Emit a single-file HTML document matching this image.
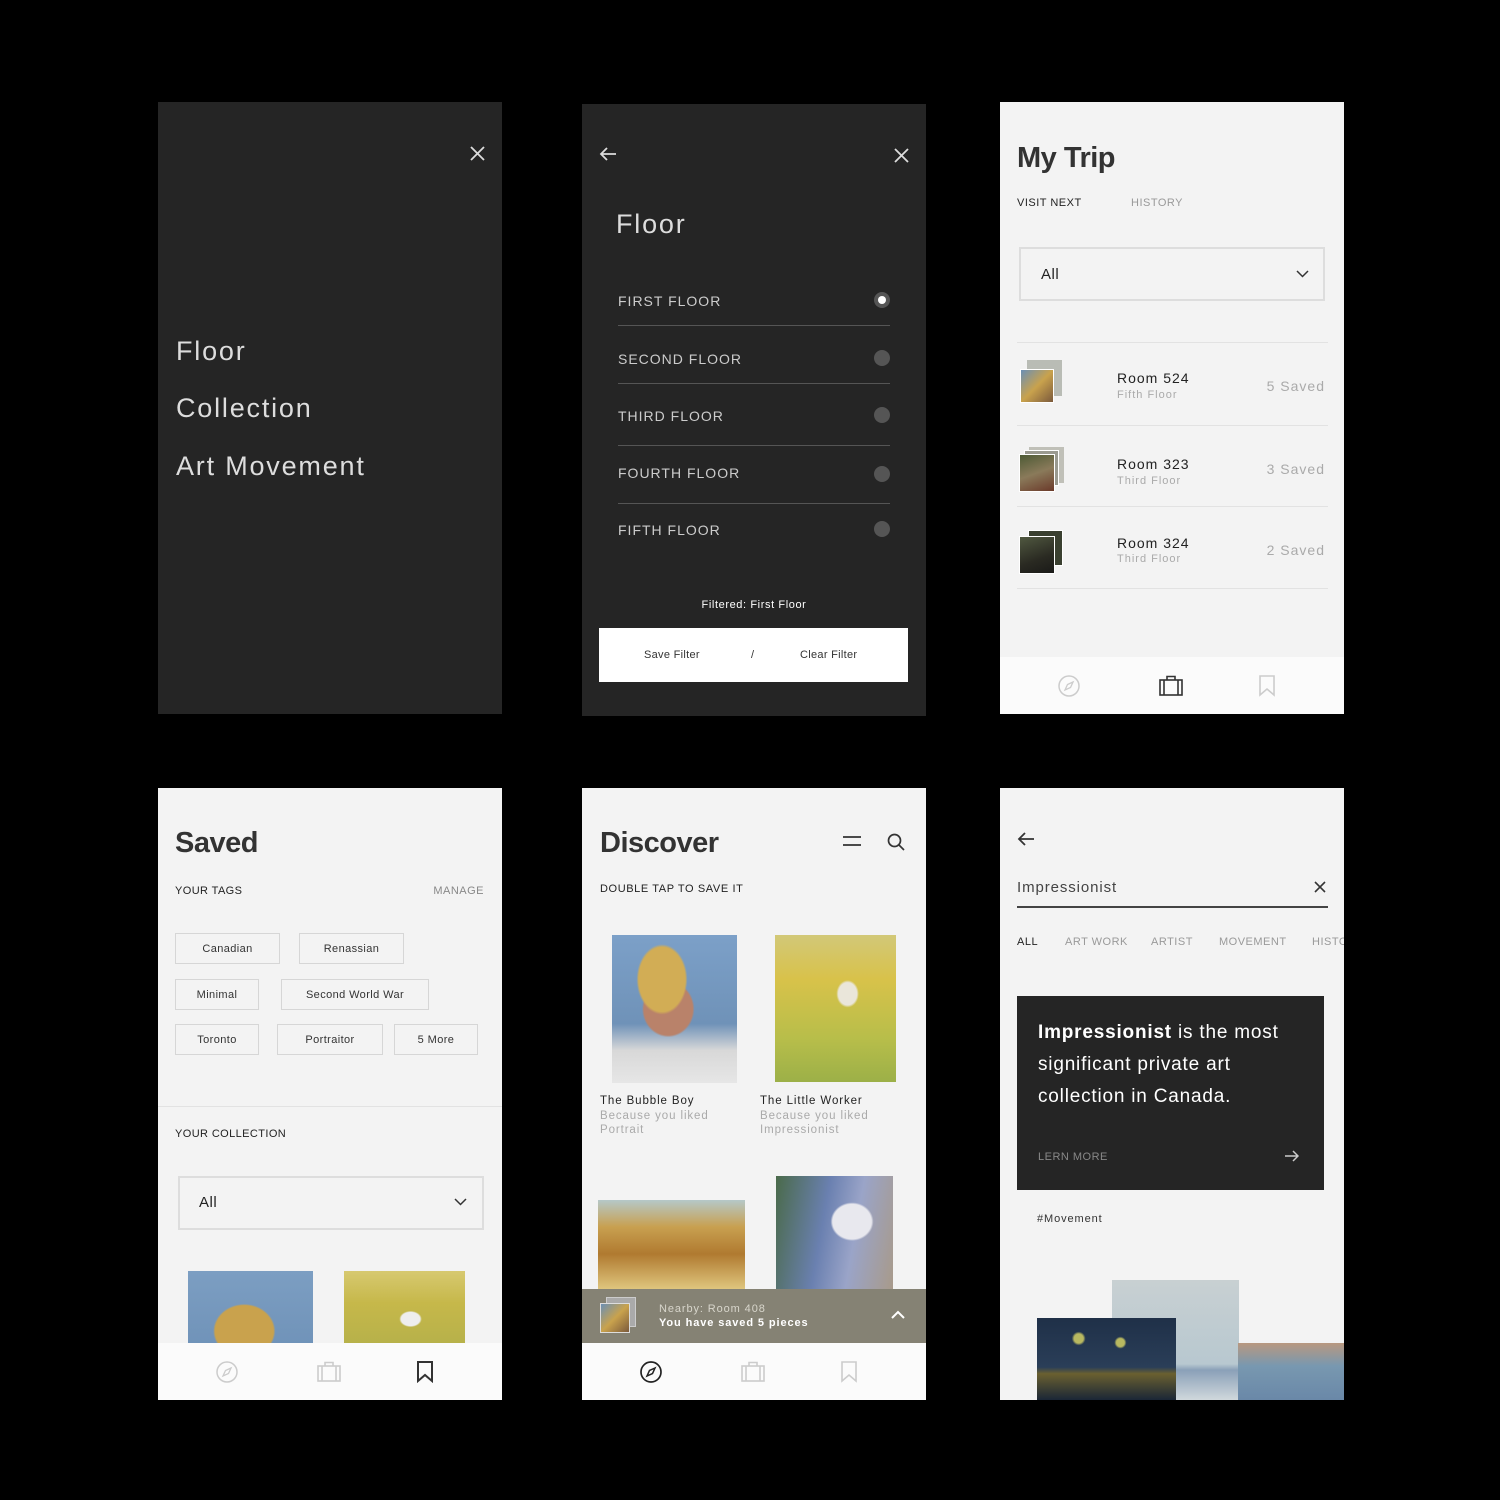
<!DOCTYPE html>
<html><head><meta charset="utf-8"><style>
*{margin:0;padding:0;box-sizing:border-box}
body{width:1500px;height:1500px;background:#000;position:relative;overflow:hidden;font-family:"Liberation Sans",sans-serif}
.p{position:absolute;width:344px;height:612px;overflow:hidden}
.d{background:#252525}.l{background:#f3f3f3}
.a{position:absolute;white-space:nowrap}
.nav{position:absolute;left:0;top:555px;width:344px;height:57px;background:#fbfbfb}
.tag{position:absolute;border:1.5px solid #d6d6d6;font-size:11px;color:#333;letter-spacing:.4px;display:flex;align-items:center;justify-content:center}
.hl{position:absolute;height:1px;background:#e2e2e2}
.t{font-size:29px;color:#333;font-weight:bold;letter-spacing:-.5px}
</style></head><body>

<!-- Panel 1 -->
<div class="p d" style="left:158px;top:102px">
<svg class="a" style="left:312px;top:44px" width="15" height="15"><path d="M1 1L14 14M14 1L1 14" stroke="#ddd" stroke-width="1.8"/></svg>
<div class="a" style="left:18px;top:234px;font-size:27px;color:#ddd;letter-spacing:1.8px">Floor</div>
<div class="a" style="left:18px;top:291px;font-size:27px;color:#ddd;letter-spacing:1.8px">Collection</div>
<div class="a" style="left:18px;top:349px;font-size:27px;color:#ddd;letter-spacing:1.8px">Art Movement</div>
</div>

<!-- Panel 2 -->
<div class="p d" style="left:582px;top:104px">
<svg class="a" style="left:17px;top:43px" width="18" height="14"><path d="M17 7H2M8 1L2 7l6 6" stroke="#ddd" stroke-width="1.8" fill="none"/></svg>
<svg class="a" style="left:312px;top:44px" width="15" height="15"><path d="M1 1L14 14M14 1L1 14" stroke="#ddd" stroke-width="1.8"/></svg>
<div class="a" style="left:34px;top:105px;font-size:27px;color:#ddd;letter-spacing:1.8px">Floor</div>
<div class="a" style="left:36px;top:189px;font-size:14px;color:#ccc;letter-spacing:1px">FIRST FLOOR</div>
<div class="a" style="left:36px;top:247px;font-size:14px;color:#ccc;letter-spacing:1px">SECOND FLOOR</div>
<div class="a" style="left:36px;top:304px;font-size:14px;color:#ccc;letter-spacing:1px">THIRD FLOOR</div>
<div class="a" style="left:36px;top:361px;font-size:14px;color:#ccc;letter-spacing:1px">FOURTH FLOOR</div>
<div class="a" style="left:36px;top:418px;font-size:14px;color:#ccc;letter-spacing:1px">FIFTH FLOOR</div>
<div class="hl" style="left:36px;top:221px;width:272px;background:#555"></div>
<div class="hl" style="left:36px;top:279px;width:272px;background:#555"></div>
<div class="hl" style="left:36px;top:341px;width:272px;background:#555"></div>
<div class="hl" style="left:36px;top:399px;width:272px;background:#555"></div>
<div class="a" style="left:292px;top:188px;width:16px;height:16px;border-radius:50%;background:#555"><div style="margin:4px;width:8px;height:8px;border-radius:50%;background:#fff"></div></div>
<div class="a" style="left:292px;top:246px;width:16px;height:16px;border-radius:50%;background:#555"></div>
<div class="a" style="left:292px;top:303px;width:16px;height:16px;border-radius:50%;background:#555"></div>
<div class="a" style="left:292px;top:362px;width:16px;height:16px;border-radius:50%;background:#555"></div>
<div class="a" style="left:292px;top:417px;width:16px;height:16px;border-radius:50%;background:#555"></div>
<div class="a" style="left:0;width:344px;top:495px;text-align:center;font-size:11px;color:#fff;letter-spacing:.6px">Filtered: First Floor</div>
<div class="a" style="left:17px;top:524px;width:309px;height:54px;background:#fff;font-size:11px;color:#333;letter-spacing:.3px">
<span class="a" style="left:45px;top:21px">Save Filter</span><span class="a" style="left:152px;top:21px">/</span><span class="a" style="left:201px;top:21px">Clear Filter</span></div>
</div>

<!-- Panel 3 -->
<div class="p l" style="left:1000px;top:102px">
<div class="a t" style="left:17px;top:40px">My Trip</div>
<div class="a" style="left:17px;top:95px;font-size:11px;color:#222;letter-spacing:.5px">VISIT NEXT</div>
<div class="a" style="left:131px;top:95px;font-size:11px;color:#999;letter-spacing:.5px">HISTORY</div>
<div class="a" style="left:19px;top:145px;width:306px;height:54px;border:2px solid #ddd"></div>
<div class="a" style="left:41px;top:164px;font-size:15px;color:#222;letter-spacing:.5px">All</div>
<svg class="a" style="left:296px;top:168px" width="13" height="8"><path d="M1 1l5.5 5.5L12 1" stroke="#333" stroke-width="1.5" fill="none"/></svg>
<div class="hl" style="left:17px;top:240px;width:311px"></div>
<div class="hl" style="left:17px;top:323px;width:311px"></div>
<div class="hl" style="left:17px;top:404px;width:311px"></div>
<div class="hl" style="left:17px;top:486px;width:311px"></div>
<div class="a" style="left:27px;top:258px;width:35px;height:36px;background:#b9bcb5"></div>
<div class="a" style="left:20px;top:267px;width:34px;height:34px;border:1.5px solid #fff;background:linear-gradient(135deg,#6a8fb5,#c9a24d 50%,#7b5a3c)"></div>
<div class="a" style="left:29px;top:345px;width:35px;height:36px;background:#c0c0b8"></div>
<div class="a" style="left:24px;top:348px;width:35px;height:36px;background:#9a9a90;border:1px solid #fff"></div>
<div class="a" style="left:19px;top:352px;width:36px;height:38px;border:1.5px solid #fff;background:linear-gradient(160deg,#4d5a35,#8a7a5a 50%,#6b3a2a)"></div>
<div class="a" style="left:28px;top:428px;width:35px;height:36px;background:#3a4030;border:1px solid #fff"></div>
<div class="a" style="left:19px;top:434px;width:36px;height:38px;border:1.5px solid #fff;background:linear-gradient(160deg,#505840,#2a2a22 60%,#1a1a18)"></div>
<div class="a" style="left:117px;top:268px;font-size:14px;color:#222;letter-spacing:1px">Room 524</div>
<div class="a" style="left:117px;top:287px;font-size:11px;color:#aaa;letter-spacing:1px">Fifth Floor</div>
<div class="a" style="right:19px;top:276px;font-size:14px;color:#aaa;letter-spacing:1px">5 Saved</div>
<div class="a" style="left:117px;top:354px;font-size:14px;color:#222;letter-spacing:1px">Room 323</div>
<div class="a" style="left:117px;top:373px;font-size:11px;color:#aaa;letter-spacing:1px">Third Floor</div>
<div class="a" style="right:19px;top:359px;font-size:14px;color:#aaa;letter-spacing:1px">3 Saved</div>
<div class="a" style="left:117px;top:433px;font-size:14px;color:#222;letter-spacing:1px">Room 324</div>
<div class="a" style="left:117px;top:451px;font-size:11px;color:#aaa;letter-spacing:1px">Third Floor</div>
<div class="a" style="right:19px;top:440px;font-size:14px;color:#aaa;letter-spacing:1px">2 Saved</div>
<div class="nav">
<svg class="a" style="left:58px;top:18px" width="22" height="22"><circle cx="11" cy="11" r="10" fill="none" stroke="#ccc" stroke-width="1.5"/><path d="M15 7L9.5 9.5 7 15l5.5-2.5z" fill="none" stroke="#ccc" stroke-width="1.3"/></svg>
<svg class="a" style="left:159px;top:18px" width="24" height="21"><rect x="1" y="5" width="22" height="15" fill="none" stroke="#333" stroke-width="1.6"/><path d="M8 5V1.5h8V5M5 5v15M19 5v15" fill="none" stroke="#333" stroke-width="1.6"/></svg>
<svg class="a" style="left:258px;top:18px" width="18" height="22"><path d="M2 1h14v19l-7-6-7 6z" fill="none" stroke="#ccc" stroke-width="1.6"/></svg>
</div>
</div>

<!-- Panel 4 Saved -->
<div class="p l" style="left:158px;top:788px">
<div class="a t" style="left:17px;top:39px">Saved</div>
<div class="a" style="left:17px;top:97px;font-size:11px;color:#222;letter-spacing:.4px">YOUR TAGS</div>
<div class="a" style="right:18px;top:97px;font-size:11px;color:#888;letter-spacing:.5px">MANAGE</div>
<div class="tag" style="left:17px;top:145px;width:105px;height:31px">Canadian</div>
<div class="tag" style="left:141px;top:145px;width:105px;height:31px">Renassian</div>
<div class="tag" style="left:17px;top:191px;width:84px;height:31px">Minimal</div>
<div class="tag" style="left:123px;top:191px;width:148px;height:31px">Second World War</div>
<div class="tag" style="left:17px;top:236px;width:84px;height:31px">Toronto</div>
<div class="tag" style="left:119px;top:236px;width:106px;height:31px">Portraitor</div>
<div class="tag" style="left:236px;top:236px;width:84px;height:31px">5 More</div>
<div class="hl" style="left:0;top:318px;width:344px"></div>
<div class="a" style="left:17px;top:340px;font-size:11px;color:#222;letter-spacing:.4px">YOUR COLLECTION</div>
<div class="a" style="left:20px;top:388px;width:306px;height:54px;border:2px solid #ddd"></div>
<div class="a" style="left:41px;top:406px;font-size:15px;color:#222;letter-spacing:.5px">All</div>
<svg class="a" style="left:296px;top:410px" width="13" height="8"><path d="M1 1l5.5 5.5L12 1" stroke="#333" stroke-width="1.5" fill="none"/></svg>
<div class="a" style="left:30px;top:483px;width:125px;height:80px;background:radial-gradient(ellipse at 45% 75%,#c9a24d 0 30%,transparent 32%),linear-gradient(#7c9ec2,#6f92b8)"></div>
<div class="a" style="left:186px;top:483px;width:121px;height:80px;background:radial-gradient(ellipse at 55% 60%,#eee 0 10%,transparent 12%),linear-gradient(#d7c970,#c6b84a 40%,#b4b04a)"></div>
<div class="nav">
<svg class="a" style="left:58px;top:18px" width="22" height="22"><circle cx="11" cy="11" r="10" fill="none" stroke="#ccc" stroke-width="1.5"/><path d="M15 7L9.5 9.5 7 15l5.5-2.5z" fill="none" stroke="#ccc" stroke-width="1.3"/></svg>
<svg class="a" style="left:159px;top:18px" width="24" height="21"><rect x="1" y="5" width="22" height="15" fill="none" stroke="#ccc" stroke-width="1.6"/><path d="M8 5V1.5h8V5M5 5v15M19 5v15" fill="none" stroke="#ccc" stroke-width="1.6"/></svg>
<svg class="a" style="left:258px;top:18px" width="18" height="22"><path d="M2 1h14v19l-7-6-7 6z" fill="none" stroke="#333" stroke-width="2"/></svg>
</div>
</div>

<!-- Panel 5 Discover -->
<div class="p l" style="left:582px;top:788px">
<div class="a t" style="left:18px;top:39px">Discover</div>
<svg class="a" style="left:261px;top:47px" width="18" height="12"><path d="M0 2h18M0 10h18" stroke="#333" stroke-width="1.8"/></svg>
<svg class="a" style="left:305px;top:45px" width="18" height="18"><circle cx="7.5" cy="7.5" r="6" fill="none" stroke="#333" stroke-width="1.7"/><path d="M12 12l5 5" stroke="#333" stroke-width="1.7"/></svg>
<div class="a" style="left:18px;top:95px;font-size:11px;color:#222;letter-spacing:.6px">DOUBLE TAP TO SAVE IT</div>
<div class="a" style="left:30px;top:147px;width:125px;height:148px;background:radial-gradient(ellipse at 40% 30%,#d2ad55 0 22%,transparent 24%),radial-gradient(ellipse at 45% 50%,#b9826a 0 25%,transparent 27%),linear-gradient(#7ca0c8,#6f92b8 60%,#d8d8d8 78%,#e6e6e6)"></div>
<div class="a" style="left:193px;top:147px;width:121px;height:147px;background:radial-gradient(ellipse at 60% 40%,#eae6da 0 9%,transparent 11%),linear-gradient(#d2c878,#d8c24a 30%,#b8be4a 70%,#9cb048)"></div>
<div class="a" style="left:18px;top:307px;font-size:11.5px;color:#222;letter-spacing:.9px">The Bubble Boy</div>
<div class="a" style="left:18px;top:321px;font-size:11.5px;color:#aaa;letter-spacing:.9px;line-height:14px">Because you liked<br>Portrait</div>
<div class="a" style="left:178px;top:307px;font-size:11.5px;color:#222;letter-spacing:.9px">The Little Worker</div>
<div class="a" style="left:178px;top:321px;font-size:11.5px;color:#aaa;letter-spacing:.9px;line-height:14px">Because you liked<br>Impressionist</div>
<div class="a" style="left:16px;top:412px;width:147px;height:90px;background:linear-gradient(#b5c8c8,#c8a050 30%,#b07a30 60%,#e0c880)"></div>
<div class="a" style="left:194px;top:388px;width:117px;height:114px;background:radial-gradient(ellipse at 65% 40%,#e8e8ee 0 18%,transparent 20%),linear-gradient(100deg,#4a6a4a,#6a80b0 40%,#9aa4c8 65%,#a89a8a)"></div>
<div class="a" style="left:0;top:501px;width:344px;height:54px;background:#858274">
<div class="a" style="left:24px;top:8px;width:30px;height:30px;background:#aaa;border:1px solid #ccc"></div>
<div class="a" style="left:18px;top:14px;width:30px;height:30px;border:1.5px solid #ddd;background:linear-gradient(135deg,#6a8fb5,#c9a24d 50%,#7b5a3c)"></div>
<div class="a" style="left:77px;top:14px;font-size:11px;color:#d8d6cc;letter-spacing:.9px">Nearby: Room 408</div>
<div class="a" style="left:77px;top:28px;font-size:11px;color:#fff;letter-spacing:.9px;font-weight:bold">You have saved 5 pieces</div>
<svg class="a" style="left:309px;top:21px" width="14" height="9"><path d="M1 8l6-6 6 6" stroke="#fff" stroke-width="2" fill="none"/></svg>
</div>
<div class="nav">
<svg class="a" style="left:58px;top:18px" width="22" height="22"><circle cx="11" cy="11" r="10" fill="none" stroke="#222" stroke-width="1.7"/><path d="M15 7L9.5 9.5 7 15l5.5-2.5z" fill="none" stroke="#222" stroke-width="1.5"/></svg>
<svg class="a" style="left:159px;top:18px" width="24" height="21"><rect x="1" y="5" width="22" height="15" fill="none" stroke="#ccc" stroke-width="1.6"/><path d="M8 5V1.5h8V5M5 5v15M19 5v15" fill="none" stroke="#ccc" stroke-width="1.6"/></svg>
<svg class="a" style="left:258px;top:18px" width="18" height="22"><path d="M2 1h14v19l-7-6-7 6z" fill="none" stroke="#ccc" stroke-width="1.6"/></svg>
</div>
</div>

<!-- Panel 6 -->
<div class="p l" style="left:1000px;top:788px">
<svg class="a" style="left:17px;top:44px" width="18" height="14"><path d="M17 7H2M8 1L2 7l6 6" stroke="#333" stroke-width="1.8" fill="none"/></svg>
<div class="a" style="left:17px;top:91px;font-size:15px;color:#444;letter-spacing:.9px">Impressionist</div>
<svg class="a" style="left:314px;top:93px" width="12" height="12"><path d="M1 1l10 10M11 1L1 11" stroke="#333" stroke-width="1.6"/></svg>
<div class="a" style="left:17px;top:118px;width:311px;height:1.5px;background:#444"></div>
<div class="a" style="left:17px;top:148px;font-size:11px;color:#222;letter-spacing:.5px">ALL</div>
<div class="a" style="left:65px;top:148px;font-size:11px;color:#999;letter-spacing:.5px">ART WORK</div>
<div class="a" style="left:151px;top:148px;font-size:11px;color:#999;letter-spacing:.5px">ARTIST</div>
<div class="a" style="left:219px;top:148px;font-size:11px;color:#999;letter-spacing:.5px">MOVEMENT</div>
<div class="a" style="left:312px;top:148px;font-size:11px;color:#999;letter-spacing:.5px">HISTORY</div>
<div class="a" style="left:17px;top:208px;width:307px;height:194px;background:#252525">
<div class="a" style="left:21px;top:21px;font-size:19px;color:#fff;letter-spacing:.8px;line-height:32px;white-space:normal;width:280px"><b>Impressionist</b> is the most significant private art collection in Canada.</div>
<div class="a" style="left:21px;top:155px;font-size:11px;color:#888;letter-spacing:.5px">LERN MORE</div>
<svg class="a" style="left:268px;top:154px" width="14" height="12"><path d="M0 6h13M8 1l5 5-5 5" stroke="#ccc" stroke-width="1.5" fill="none"/></svg>
</div>
<div class="a" style="left:37px;top:425px;font-size:11px;color:#333;letter-spacing:.9px">#Movement</div>
<div class="a" style="left:112px;top:492px;width:127px;height:120px;background:linear-gradient(#c8d0d2,#b8c8d0 70%,#8aa0b8 75%,#d0d8dc)"></div>
<div class="a" style="left:37px;top:530px;width:139px;height:82px;background:radial-gradient(circle at 60% 30%,#b8b860 0 4%,transparent 6%),radial-gradient(circle at 30% 25%,#b8b860 0 4%,transparent 6%),linear-gradient(#1f3048,#2a3e58 60%,#6a6030 68%,#1a2636)"></div>
<div class="a" style="left:238px;top:555px;width:106px;height:57px;background:linear-gradient(#b89880,#7898b0 40%,#6a88a8)"></div>
</div>

</body></html>
